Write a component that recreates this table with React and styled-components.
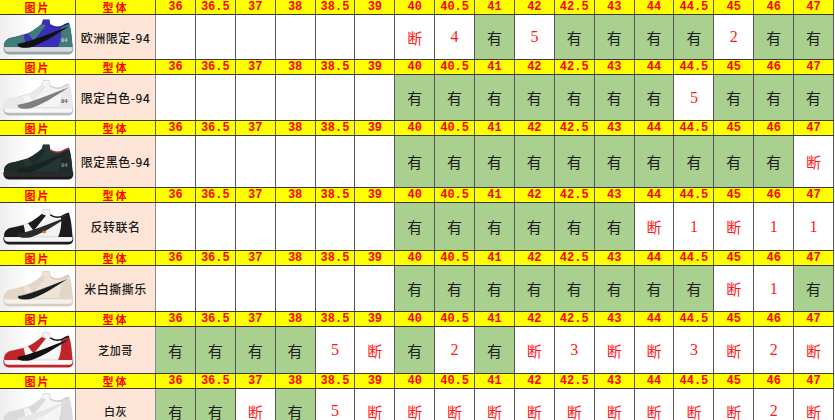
import React from "react";
import styled, { createGlobalStyle } from "styled-components";

const SIZES = ["36", "36.5", "37", "38", "38.5", "39", "40", "40.5", "41", "42", "42.5", "43", "44", "44.5", "45", "46", "47"];

// "" = empty cell, "有" = in stock (green), anything else red on white
const E = "";
const Y = "有";
const D = "断";

const ROWS = [
  {
    name: "欧洲限定-94",
    h: 44,
    shoe: { upper: "#3a2fb8", overlay: "#3f7d78", swoosh: "#111", sole: "#9aa2a8", mid: "#d8dcdc", collar: "#2a2290", label: "94" },
    stock: [E, E, E, E, E, E, D, "4", Y, "5", Y, Y, Y, Y, "2", Y, Y],
  },
  {
    name: "限定白色-94",
    h: 45,
    shoe: { upper: "#f4f4f4", overlay: "#e9e9e9", swoosh: "#7d7f82", sole: "#b9bcbf", mid: "#f7f7f7", collar: "#cfd1d3", label: "94", labelColor: "#555" },
    stock: [E, E, E, E, E, E, Y, Y, Y, Y, Y, Y, Y, "5", Y, Y, Y],
  },
  {
    name: "限定黑色-94",
    h: 51,
    shoe: { upper: "#243734", overlay: "#1d2b29", swoosh: "#1a2321", sole: "#1a1a1a", mid: "#2a2a2a", collar: "#b0303a", label: "94", labelColor: "#8a8f8e" },
    stock: [E, E, E, E, E, E, Y, Y, Y, Y, Y, Y, Y, Y, Y, Y, D],
  },
  {
    name: "反转联名",
    h: 47,
    shoe: { upper: "#f2f2f2", overlay: "#1b1b1b", swoosh: "#2a2a2a", sole: "#1c1c1c", mid: "#f4f4f4", collar: "#1b1b1b", tag: "#f06a1a" },
    stock: [E, E, E, E, E, E, Y, Y, Y, Y, Y, Y, D, "1", D, "1", "1"],
  },
  {
    name: "米白撕撕乐",
    h: 45,
    shoe: { upper: "#eee3d6", overlay: "#e4d6c6", swoosh: "#1d1d1d", sole: "#d9cdbf", mid: "#f5f1ec", collar: "#d6c8b8", stripe: true },
    stock: [E, E, E, E, E, E, Y, Y, Y, Y, Y, Y, Y, Y, D, "1", Y],
  },
  {
    name: "芝加哥",
    h: 46,
    small: true,
    shoe: { upper: "#f6f6f6", overlay: "#c0252b", swoosh: "#111", sole: "#c0252b", mid: "#f7f7f7", collar: "#111" },
    stock: [Y, Y, Y, Y, "5", D, Y, "2", Y, D, "3", D, D, "3", D, "2", D],
  },
  {
    name: "白灰",
    h: 44,
    small: true,
    shoe: { upper: "#f5f5f5", overlay: "#dadada", swoosh: "#e6e6e6", sole: "#d5d5d5", mid: "#f6f6f6", collar: "#cfcfcf" },
    stock: [Y, Y, D, Y, "5", D, D, D, D, D, D, D, D, D, D, "2", D],
  },
];

const GlobalStyle = createGlobalStyle`
  html, body {
    margin: 0;
    padding: 0;
    background: #ffffff;
    overflow: hidden;
  }
`;

const COLS = "76px 80px repeat(17, 1fr)";

const Sheet = styled.div`
  width: 834px;
  display: flex;
  flex-direction: column;
`;

const HeaderRow = styled.div`
  display: grid;
  grid-template-columns: ${COLS};
  height: 14px;
  background: #ffff00;
  border-bottom: 1px solid #3a3a3a;
`;

const HeaderCell = styled.div`
  display: flex;
  align-items: center;
  justify-content: center;
  border-right: 1px solid #5a5a5a;
  color: #ff0000;
  font-family: ${(p) =>
    p.$cjk ? `"Noto Sans CJK SC", sans-serif` : `"Liberation Mono", monospace`};
  font-weight: 700;
  font-size: ${(p) => (p.$cjk ? "11px" : "12px")};
  line-height: 14px;
  height: 14px;
  letter-spacing: ${(p) => (p.$cjk ? "2px" : "0")};
  white-space: nowrap;
`;

const BodyRow = styled.div`
  display: grid;
  grid-template-columns: ${COLS};
  height: ${(p) => p.$h}px;
  border-bottom: 1px solid #3a3a3a;
`;

const ImageCell = styled.div`
  display: flex;
  align-items: center;
  justify-content: center;
  background: linear-gradient(90deg, #eeeeee 0%, #ffffff 40%);
  border-right: 1px solid #8a8a8a;
  overflow: hidden;
`;

const ModelCell = styled.div`
  display: flex;
  align-items: center;
  justify-content: center;
  background: #fce4d6;
  border-right: 1px solid #8a8a8a;
  color: #1a1a1a;
  font-family: "Noto Sans CJK SC", sans-serif;
  font-size: ${(p) => (p.$small ? "11px" : "12px")};
  font-weight: 500;
  letter-spacing: 0.5px;
  white-space: nowrap;
`;

const Cell = styled.div`
  display: flex;
  align-items: center;
  justify-content: center;
  border-right: 1px solid #555555;
  background: ${(p) => (p.$kind === "yes" ? "#a9d08e" : "#ffffff")};
  color: ${(p) => (p.$kind === "yes" ? "#1e1e1e" : "#ff1a1a")};
  font-family: ${(p) =>
    p.$kind === "num" ? `"Liberation Serif", serif` : `"Noto Sans CJK SC", sans-serif`};
  font-size: ${(p) => (p.$kind === "num" ? "16px" : "15px")};
  line-height: 1;
`;

const Shoe = ({ upper, overlay, swoosh, sole, mid, collar, label, labelColor, tag, stripe }) => (
  <svg width="72" height="38" viewBox="0 0 100 50" preserveAspectRatio="none">
    {/* outsole + midsole */}
    <path d="M2 38 Q1 47 9 48 L93 48 Q100 47 99 38 Z" fill={sole} />
    <path d="M3 38 Q2 44 9 44.5 L93 44.5 Q99 44 98 38 Z" fill={mid} />
    {/* upper */}
    <path
      d="M3 38 C2 30 8 26 18 25 L36 20 C44 17 50 12 55 8 L57 2 L66 2 L67 9 C73 13 81 13 87 9 L93 7 C96 15 97 27 98 38 Z"
      fill={upper}
      stroke="rgba(0,0,0,0.25)"
      strokeWidth="0.6"
    />
    {/* toe cap */}
    <path d="M3 38 C2 30 8 26 18 25 L30 22.5 C32 29 32 35 34 38 Z" fill={overlay} />
    {/* heel */}
    <path d="M82 12 C86 11 90 9 93 7 C96 15 97 27 98 38 L78 38 C82 30 83 20 82 12 Z" fill={overlay} />
    {/* eyestay */}
    <path d="M36 20 C44 17 50 12 55 8 L61 10 C55 17 49 24 44 30 Z" fill={overlay} />
    {/* collar */}
    <path d="M67 9 C73 13 81 13 87 9 L93 7" stroke={collar} strokeWidth="2.2" fill="none" />
    {/* swoosh */}
    <path
      d="M22 34 C40 32 66 20 93 11 C74 23 52 36 40 38.5 C30 40 20 39.5 22 34 Z"
      fill={swoosh}
      stroke={stripe ? "#f5f5f5" : "none"}
      strokeWidth={stripe ? "0.8" : "0"}
    />
    {label && (
      <text x="82" y="31" fontSize="8" fontWeight="700" fill={labelColor || "#c9cbd0"} fontFamily="Liberation Sans, sans-serif">
        {label}
      </text>
    )}
    {tag && <rect x="56" y="30" width="5" height="3" fill={tag} />}
  </svg>
);

const kindOf = (v) => (v === Y ? "yes" : v === D ? "no" : v === E ? "empty" : "num");

const Header = () => (
  <HeaderRow>
    <HeaderCell $cjk>图片</HeaderCell>
    <HeaderCell $cjk>型体</HeaderCell>
    {SIZES.map((s) => (
      <HeaderCell key={s}>{s}</HeaderCell>
    ))}
  </HeaderRow>
);

export default function App() {
  return (
    <>
      <GlobalStyle />
      <Sheet>
        {ROWS.map((row) => (
          <React.Fragment key={row.name}>
            <Header />
            <BodyRow $h={row.h}>
              <ImageCell>
                <Shoe {...row.shoe} />
              </ImageCell>
              <ModelCell $small={row.small}>{row.name}</ModelCell>
              {row.stock.map((v, i) => (
                <Cell key={i} $kind={kindOf(v)}>
                  {v}
                </Cell>
              ))}
            </BodyRow>
          </React.Fragment>
        ))}
      </Sheet>
    </>
  );
}
